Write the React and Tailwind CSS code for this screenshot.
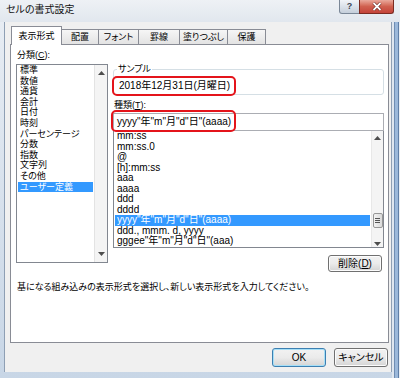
import React from 'react';

const FONT = "[font-family:'Liberation_Sans','Noto_Sans_CJK_JP',sans-serif] [font-feature-settings:'palt']";

const categories = ['標準', '数値', '通貨', '会計', '日付', '時刻', 'パーセンテージ', '分数', '指数', '文字列', 'その他', 'ユーザー定義'];

const formats = [
  'mm:ss',
  'mm:ss.0',
  '@',
  '[h]:mm:ss',
  'aaa',
  'aaaa',
  'ddd',
  'dddd',
  'yyyy"年"m"月"d"日"(aaaa)',
  'ddd., mmm. d, yyyy',
  'gggee"年"m"月"d"日"(aaa)',
];

function Arrow({ up }) {
  return (
    <svg width="7" height="4" viewBox="0 0 7 4" className="block">
      {up ? <path d="M0 4 L3.5 0 L7 4 Z" fill="#4d4d4d" /> : <path d="M0 0 L3.5 4 L7 0 Z" fill="#4d4d4d" />}
    </svg>
  );
}

function Tab({ label, active, w }) {
  if (active) {
    return (
      <div className={`relative z-10 -mb-px h-[19px] ${w} flex items-center justify-center border border-b-0 border-[#898c95] bg-white text-[9px] leading-none`}>
        {label}
      </div>
    );
  }
  return (
    <div className={`-ml-px h-[15px] ${w} flex items-center justify-center border border-b-0 border-[#898c95] bg-gradient-to-b from-[#f6f6f6] to-[#e3e3e3] text-[9px] leading-none`}>
      {label}
    </div>
  );
}

function WinButton({ children, primary, className = '' }) {
  return (
    <div
      className={`flex items-center justify-center rounded-[3px] border ${primary ? 'border-[#3c7fb1] shadow-[inset_0_0_0_1px_#a6dff7]' : 'border-[#707070] shadow-[inset_0_0_0_1px_#fcfcfc]'} bg-gradient-to-b from-[#f2f2f2] via-[#ebebeb] to-[#d4d4d4] text-[10px] leading-none ${className}`}
    >
      {children}
    </div>
  );
}

export default function App() {
  return (
    <div className={`w-[400px] h-[378px] overflow-hidden bg-gradient-to-b from-[#e9eef4] to-[#c8d6e6] text-black ${FONT} flex flex-col`}>
      {/* title bar */}
      <div className="h-[22px] flex items-start bg-gradient-to-b from-[#eef1f5] to-[#e1e7ee]">
        <div className="pl-[6px] pt-[4px] text-[10px] leading-[12px] text-[#111]">セルの書式設定</div>
        <div className="ml-auto mr-[6px] flex">
          <div className="w-[21px] h-[14px] flex items-center justify-center rounded-bl-[3px] border border-t-0 border-[#7a8797] bg-gradient-to-b from-[#f1f4f8] to-[#c5cfdb]">
            <span className="text-[9px] leading-none font-bold text-[#3b4654]">?</span>
          </div>
          <div className="-ml-px w-[35px] h-[14px] flex items-center justify-center rounded-br-[3px] border border-t-0 border-[#7b2b22] bg-gradient-to-b from-[#e9a99c] via-[#d0604f] to-[#c4433a]">
            <svg width="10" height="9" viewBox="0 0 10 9">
              <path d="M1.5 1 L8.5 8 M8.5 1 L1.5 8" stroke="#5a1a14" strokeWidth="3" />
              <path d="M1.5 1 L8.5 8 M8.5 1 L1.5 8" stroke="#fff" strokeWidth="1.8" />
            </svg>
          </div>
        </div>
      </div>

      <div className="flex flex-1">
        {/* left frame */}
        <div className="w-[4px]" />
        {/* content */}
        <div className="w-[388px] h-[350px] bg-[#f0f0f0] border-x border-[#8e9fb4] flex flex-col pt-[4px] pl-[5px]">
          <div className="flex items-end h-[18px] pl-[1px]">
            <Tab label="表示形式" active w="w-[51px]" />
            <Tab label="配置" w="w-[38px]" />
            <Tab label="フォント" w="w-[41px]" />
            <Tab label="罫線" w="w-[42px]" />
            <Tab label="塗りつぶし" w="w-[49px]" />
            <Tab label="保護" w="w-[39px]" />
          </div>

          {/* panel */}
          <div className="w-[379px] h-[299px] border border-[#898c95] bg-white flex flex-col">
            <div className="flex items-start">
              {/* left column */}
              <div className="ml-[5px] pt-[5px] flex flex-col">
                <div className="pl-[1px] h-[10px] text-[9px] leading-[10px]">
                  分類(<span className="underline">C</span>):
                </div>
                <div className="mt-[4px] w-[92px] h-[199px] border border-[#828790] flex">
                  <div className="flex-1 p-[0px_1px]">
                    {categories.map((c, i) => (
                      <div
                        key={c}
                        className={`h-[10.6px] pl-[2px] text-[9px] leading-[10.6px] whitespace-nowrap ${i === 11 ? 'bg-[#3399ff] text-white' : ''}`}
                      >
                        {c}
                      </div>
                    ))}
                  </div>
                  <div className="w-[13px] border-l border-[#e3e3e3] bg-[#f4f4f4] flex flex-col items-center justify-between py-[6px]">
                    <Arrow up />
                    <Arrow />
                  </div>
                </div>
              </div>

              {/* right column */}
              <div className="ml-[5px] w-[271px] flex flex-col">
                <fieldset className="mt-[19px] h-[31px] border border-[#d5dfe5] rounded-[3px] pl-[0px]">
                  <legend className="ml-[3px] px-[1px] text-[9px] leading-[10px]">サンプル</legend>
                  <div className="-ml-[2px] mt-[2px] w-[124px] h-[20px] border-2 border-[#e4141b] rounded-[5px] flex items-center pl-[5px] text-[10px] leading-none whitespace-nowrap">
                    2018年12月31日(月曜日)
                  </div>
                </fieldset>

                <div className="mt-[5px] pl-[1px] h-[10px] text-[9px] leading-[10px]">
                  種類(<span className="underline">T</span>):
                </div>

                <div className="relative mt-[3px] h-[18px] w-[271px] border border-[#abadb3] bg-white flex items-center pl-[3px] text-[10px] leading-none whitespace-nowrap">
                  yyyy"年"m"月"d"日"(aaaa)
                  <div className="absolute left-[-3px] top-[-4px] w-[125px] h-[22px] border-2 border-[#e4141b] rounded-[5px]" />
                </div>

                <div className="h-[117px] w-[271px] border-x border-b border-[#828790] flex">
                  <div className="flex-1 pl-[1px] pr-[1px]">
                    {formats.map((f, i) => (
                      <div
                        key={f}
                        className={`h-[10.5px] pl-[2px] text-[10px] leading-[10.5px] whitespace-nowrap ${i === 8 ? 'bg-[#3399ff] text-white' : ''}`}
                      >
                        {f}
                      </div>
                    ))}
                  </div>
                  <div className="w-[12px] bg-[#f4f4f4] border-l border-[#e8e8e8] flex flex-col items-center">
                    <div className="mt-[5px]">
                      <Arrow up />
                    </div>
                    <div className="mt-[73px] w-[10px] h-[15px] rounded-[2px] border border-[#979797] bg-gradient-to-r from-[#f3f3f3] to-[#dadada] flex flex-col items-center justify-center gap-[1px]">
                      <div className="w-[5px] h-px bg-[#555]" />
                      <div className="w-[5px] h-px bg-[#555]" />
                      <div className="w-[5px] h-px bg-[#555]" />
                    </div>
                    <div className="mt-[14px]">
                      <Arrow />
                    </div>
                  </div>
                </div>

                <WinButton className="mt-[7px] self-end mr-[2px] w-[54px] h-[17px] text-[9px]">
                  削除(<span className="underline">D</span>)
                </WinButton>
              </div>
            </div>

            <div className="mt-[10px] ml-[6px] text-[9px] leading-[10px] whitespace-nowrap">
              基になる組み込みの表示形式を選択し、新しい表示形式を入力してください。
            </div>
          </div>

          {/* bottom buttons */}
          <div className="mt-[5px] flex justify-end gap-[8px] pr-[3px]">
            <WinButton primary className="w-[54px] h-[19px]">OK</WinButton>
            <WinButton className="w-[54px] h-[19px] text-[9px]">キャンセル</WinButton>
          </div>
        </div>
        {/* right frame */}
        <div className="flex-1 flex">
          <div className="w-[2px] bg-[#dfe7f0]" />
          <div className="w-[1px] bg-[#6f8db3]" />
          <div className="w-[3px] bg-[#9bb8da]" />
          <div className="w-[1px] bg-[#5f7fa8]" />
          <div className="flex-1 bg-[#e9eef4]" />
        </div>
      </div>
    </div>
  );
}
